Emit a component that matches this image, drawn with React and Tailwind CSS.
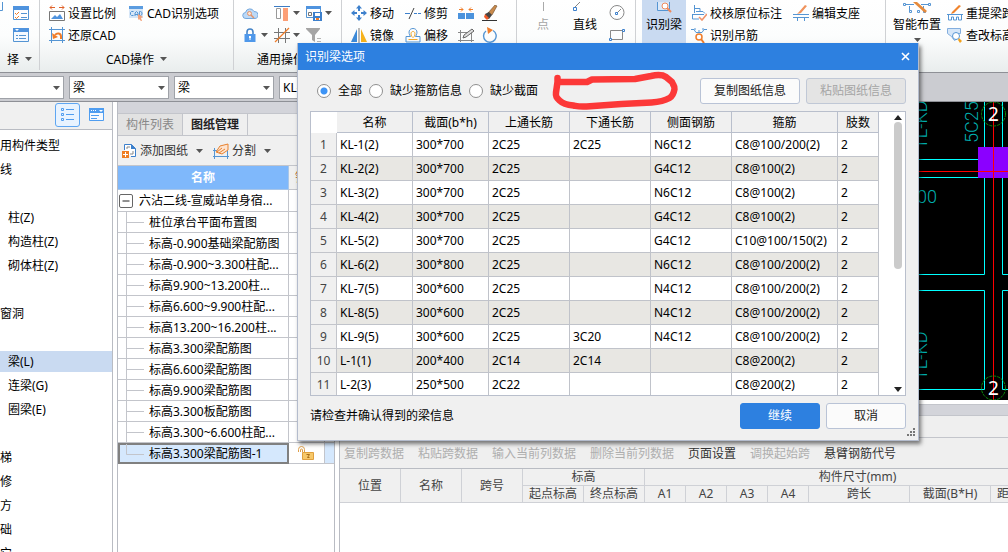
import React from "react";

const B = "#5595d3";
const O = "#f07d2a";

function Caret({ className = "" }) {
  return (
    <svg width="7" height="4" viewBox="0 0 7 4" className={"shrink-0 " + className} aria-hidden="true">
      <path d="M0 0h7L3.5 4z" fill="#555" />
    </svg>
  );
}

function Svg({ children, w = 16, h = 16 }) {
  return (
    <svg width={w} height={h} viewBox={`0 0 ${w} ${h}`} fill="none" className="shrink-0" aria-hidden="true">
      {children}
    </svg>
  );
}

const icons = {
  check: (
    <Svg>
      <path d="M.5 1.5h15v13H.5z" fill="#fff" stroke={B} />
      <path d="M0 1h16v4H0z" fill="#4f93de" />
      <path d="M2 8l1.500 1.500L6 7M2 12l1.500 1.500L6 11" stroke={O} />
      <path d="M8 8.500h6M8 12.500h6" stroke={B} />
    </Svg>
  ),
  props: (
    <Svg>
      <path d="M.5 1.500h15v13H.5z" fill="#f4f9ff" stroke={B} />
      <path d="M0 1h16v4H0z" fill="#4f93de" />
      <path d="M2 2h4L4 4z" fill="#fff" />
      <path d="M3 8.500h2M3 11.500h2M6 8.500h7M6 11.500h7" stroke={B} />
    </Svg>
  ),
  scale: (
    <Svg>
      <path d="M1 2.500h5M10 2.500h5M3 .5l-2 2 2 2M13 .5l2 2-2 2" stroke="#e0622a" />
      <path d="M.5 6.500h15v9H.5z" fill="#fff" stroke="#777" />
      <path d="M2 14l4-4 2 2 3-3 3 5z" fill="#4f93de" />
    </Svg>
  ),
  restore: (
    <Svg>
      <path d="M2.500 0v16M13.500 0v16M0 2.500h16M0 13.500h16" stroke={B} />
      <path d="M12 12V9.500C12 6 8 5.500 6 8" stroke={O} strokeWidth="2" />
      <path d="M3 6l1 6 5-2z" fill={O} />
    </Svg>
  ),
  cad: (
    <Svg w={15}>
      <path d="M0 1h14v12H0z" fill="#d6e6f7" />
      <path d="M0 1h14v3H0z" fill="#5b9ce0" />
      <path d="M4.500 6.500h-2L1.500 7.500v2l1 1h2M6 11V8l1.500-1.500L9 8v3M6 9.500h3M10.500 6.500v4h1l1.500-1v-2l-1.500-1z" stroke={B} />
      <path d="M9 9l5 3-2 1 1 3h-1l-2-2-1 1z" fill="#f3a27b" />
    </Svg>
  ),
  cloud: (
    <Svg>
      <path d="M4 13.500a3 3 0 01-.5-6A4.500 4.500 0 0112 6.500a3.500 3.500 0 011 7z" fill="#bcd9f7" stroke="#76a9de" />
      <circle cx="7.500" cy="8.500" r="2" fill="#fbe3d3" stroke="#e0936b" />
      <path d="M9 10l3 3" stroke="#e0936b" strokeWidth="1.500" />
    </Svg>
  ),
  lock: (
    <Svg>
      <path d="M5 7V5a3 3 0 016 0v2" stroke="#4584c8" strokeWidth="1.600" />
      <path d="M2.500 7h11v8h-11z" fill="#4f98ea" />
      <path d="M7.500 9h1v4h-1zM7 9h2v2H7z" fill="#fff" />
    </Svg>
  ),
  align: (
    <Svg>
      <path d="M0 1.500h16" stroke="#3c7cc4" />
      <path d="M2.500 3.500h4v10h-4z" stroke="#999" fill="#fff" />
      <path d="M9 3h5v13H9z" fill="#fc9f77" />
    </Svg>
  ),
  grid: (
    <Svg>
      <path d="M4.500 1v15M11.500 1v15M0 5.500h16M0 11.500h16" stroke="#777" />
      <path d="M1 15L15 1" stroke={O} strokeWidth="1.200" />
    </Svg>
  ),
  save: (
    <Svg>
      <path d="M.5 1.500h14v11H.5z" fill="#fff" stroke={B} />
      <path d="M0 1h15v3H0z" fill="#4f93de" />
      <path d="M2.500 7.500h3v3h-3z" stroke="#777" />
      <path d="M7 7h9v9H7z" fill="#3d80cc" />
      <path d="M9 8h5v3H9zM9 13h5v2H9z" fill="#fff" />
      <path d="M10 13h3v2h-3z" fill={O} />
    </Svg>
  ),
  filter: (
    <Svg>
      <path d="M0 1h14v1L9 8v7l-3-2V8L0 2z" fill="#a5a5a5" />
      <path d="M11 11.500h4M11 14.500h4" stroke="#b5b5b5" />
    </Svg>
  ),
  move: (
    <Svg>
      <path d="M8 0l3 3.500H9V6H7V3.500H5zM8 16l3-3.500H9V10H7v2.500H5zM0 8l3.500-3v2H6v2H3.500v2zM16 8l-3.500-3v2H10v2h2.500v2z" fill="#3d80cc" />
    </Svg>
  ),
  mirror: (
    <Svg>
      <path d="M6 2v13H0z" fill="#3d8ad8" />
      <path d="M10 2v13h6z" fill="#f6b21b" />
      <path d="M8 1v15" stroke="#777" />
    </Svg>
  ),
  trim: (
    <Svg>
      <path d="M0 8.500h5" stroke="#3d80cc" />
      <path d="M9 8.500h7" stroke="#3d80cc" strokeDasharray="3 1" />
      <path d="M4 14l5-11" stroke="#444" />
    </Svg>
  ),
  offset: (
    <Svg>
      <path d="M1 15v-5.500h4.500C2.500 5 4.500 1.500 8 1.500S13.500 5 10.500 9.500H15V15z" stroke={B} />
      <path d="M3.500 12.500h9M7.500 10.500C5 7 6 4.500 8 4.500S11 7 8.500 10.500" stroke="#f0a92c" />
    </Svg>
  ),
  merge: (
    <Svg>
      <path d="M0 8h7v6H0zM8 8h8v6H8z" fill="#4b93dd" />
      <path d="M1 4.500h4M11 4.500h4M3 2.500l2 2-2 2M13 2.500l-2 2 2 2" stroke={O} />
    </Svg>
  ),
  eraser: (
    <Svg>
      <path d="M6 8l7-8 2 1-5 9z" fill="#c98a4b" stroke="#6b4a2a" strokeWidth=".6" />
      <path d="M3 9l4-2 3 3-3 4-4-1z" fill="#444" />
      <path d="M3 9l4 4-2 2-3-3z" fill="#ef5a28" />
      <path d="M0 15.500h15" stroke="#333" />
    </Svg>
  ),
  sketch: (
    <Svg>
      <path d="M2.500 3v12M13.500 5v10M0 5.500h9M0 13.500h16" stroke="#888" />
      <path d="M5 11l1-3 8-6 2 2-8 6z" fill="#ddd" stroke="#666" />
    </Svg>
  ),
  rotate: (
    <Svg>
      <path d="M11 3.500A6.300 6.300 0 114 4" stroke={B} strokeWidth="1.400" />
      <path d="M5 0l6 3-5 4z" fill={O} />
    </Svg>
  ),
  circle: (
    <Svg>
      <circle cx="8" cy="7.500" r="7" stroke="#888" />
      <path d="M8 8l4-4" stroke="#888" />
      <path d="M6.500 7.500h2v2h-2z" fill="#fff" stroke="#3d80cc" />
    </Svg>
  ),
  rect: (
    <Svg>
      <path d="M1.500 3.500h12v9h-12z" stroke="#888" />
      <path d="M13.500 2.500h2v2h-2zM.5 11.500h2v2h-2z" fill="#fff" stroke="#3d80cc" />
    </Svg>
  ),
  verify: (
    <Svg>
      <path d="M3.500 0v8M3 3.500h6v3M5 6.500h7l2 2M1 9.500h12M1.500 9v5H8" stroke={B} />
      <path d="M8 12l3 3 5-6" stroke="#f0936b" strokeWidth="1.600" />
    </Svg>
  ),
  support: (
    <Svg>
      <path d="M0 9.500h16M0 12.500h16M4.500 13v3M11.500 13v3" stroke={B} />
      <path d="M5 8l7-8 2 1-6 7-4 1z" fill="#f0935c" />
    </Svg>
  ),
  hanging: (
    <Svg>
      <path d="M0 2.500h3l2 3h6l2-3h3M4 1v2M8 3v3M12 1v2" stroke={B} />
      <circle cx="8" cy="10" r="3" fill="#fff" stroke={O} strokeWidth="1.500" />
      <path d="M10 12l3 4" stroke={O} strokeWidth="2" />
    </Svg>
  ),
  respan: (
    <Svg>
      <path d="M0 9.500h16M1.500 10v5h3v-3h2v3h3v-3h2v3h3v-5" stroke={B} />
      <path d="M5 7l7-7 2 1-7 7-3 1z" fill="#f0832c" />
    </Svg>
  ),
  level: (
    <Svg>
      <path d="M.5 1.500h13v5h-3v5l-3 2-3-4-4-3z" fill="#d5e6f8" stroke="#83aede" />
      <circle cx="9" cy="9" r="3.500" fill="#fff" stroke={B} />
      <path d="M12 11l3 3-2 2-2-3z" fill="#f3a11b" />
    </Svg>
  ),
};

function Tool({ icon, label, caret, className = "" }) {
  return (
    <button type="button" aria-label={label || icon} className={"flex h-[22px] items-center gap-[3px] whitespace-nowrap " + className}>
      {icons[icon]}
      {label && <span>{label}</span>}
      {caret && <Caret />}
    </button>
  );
}

function Group({ label, className = "", children }) {
  return (
    <section className={"flex h-[70px] shrink-0 flex-col border-r border-[#cfd1d4] " + className}>
      <div className="flex h-[46px] shrink-0 items-start pt-[2px]">{children}</div>
      {label && (
        <button type="button" className="flex h-[26px] shrink-0 items-center justify-center gap-[6px] whitespace-nowrap">
          {label}
          <Caret />
        </button>
      )}
    </section>
  );
}

function Ribbon() {
  return (
    <header className="flex h-[73px] shrink-0 overflow-hidden border-b border-[#8e9096] bg-linear-to-b from-white via-[#fcfdfd] to-[#e9eded]">
      <Group label="择" className="w-10">
        <div className="flex w-full justify-between pr-[10px]">
          <Svg w={3} h={12}>
            <path d="M0 8.500h2.500V0" stroke={B} />
          </Svg>
          <div className="flex flex-col">
            <Tool icon="check" />
            <Tool icon="props" />
          </div>
        </div>
      </Group>
      <Group label="CAD操作" className="w-[194px]">
        <div className="grid grid-cols-[80px_auto] pl-[9px]">
          <Tool icon="scale" label="设置比例" />
          <Tool icon="cad" label="CAD识别选项" />
          <Tool icon="restore" label="还原CAD" />
        </div>
      </Group>
      <Group label="通用操作" className="w-[108px]">
        <div className="grid grid-cols-[32px_32px_auto] pl-[8px]">
          <Tool icon="cloud" />
          <Tool icon="align" caret />
          <Tool icon="save" caret />
          <Tool icon="lock" caret />
          <Tool icon="grid" caret />
          <Tool icon="filter" />
        </div>
      </Group>
      <Group className="w-[175px]">
        <div className="grid grid-cols-[54px_53px_24px_auto] pl-[9px]">
          <Tool icon="move" label="移动" />
          <Tool icon="trim" label="修剪" />
          <Tool icon="merge" />
          <Tool icon="eraser" />
          <Tool icon="mirror" label="镜像" />
          <Tool icon="offset" label="偏移" />
          <Tool icon="sketch" />
          <Tool icon="rotate" />
        </div>
      </Group>
      <Group className="w-[119px]">
        <div className="flex pl-5">
          <button type="button" className="flex w-3 flex-col items-center text-[#a5a5a5]">
            <Svg w={12} h={14}>
              <path d="M6.500 0v9" stroke="#aaa" />
            </Svg>
            点
          </button>
          <button type="button" className="ml-[24px] flex w-6 flex-col items-center">
            <Svg w={24} h={14}>
              <path d="M2 5l7-7" stroke="#888" />
              <path d="M.5 5.500h3v3h-3z" fill="#fff" stroke="#3d80cc" />
            </Svg>
            直线
          </button>
          <div className="ml-[12px] flex flex-col">
            <Tool icon="circle" />
            <Tool icon="rect" />
          </div>
        </div>
      </Group>
      <Group className="w-[250px]">
        <div className="-mt-[2px] flex pl-[6px]">
          <button type="button" className="flex h-[46px] w-11 flex-col items-center bg-[#c9daf1] pt-[2px]">
            <Svg w={16} h={14}>
              <path d="M1.500 0v8.500h12V0" stroke={B} fill="#dbe8f8" />
              <circle cx="9" cy="4" r="3" fill="#fff" stroke="#f08a5c" />
              <path d="M11 6l4 4" stroke="#f08a5c" strokeWidth="2" />
            </Svg>
            识别梁
          </button>
          <div className="ml-[5px] grid grid-cols-[102px_auto] content-start pt-[2px]">
            <Tool icon="verify" label="校核原位标注" />
            <Tool icon="support" label="编辑支座" />
            <Tool icon="hanging" label="识别吊筋" />
          </div>
        </div>
      </Group>
      <section className="flex shrink-0 pt-[2px] pl-[7px]">
        <button type="button" className="flex w-12 flex-col items-center whitespace-nowrap">
          <Svg w={32} h={14}>
            <path d="M5 2.500h8M20 2.500h7M8.500 4v5M22.500 4v5" stroke={B} />
            <path d="M2.500 1.500h2v2h-2zM27.500 1.500h2v2h-2zM8.500 8.500h2v2h-2zM16.500 8.500h2v2h-2zM22.500 8.500h2v2h-2z" fill="#fff" stroke={B} />
            <path d="M12 0l12 11 2-2-10-9z" fill="#e58a3c" />
          </Svg>
          智能布置
          <Caret className="mt-[5px]" />
        </button>
        <div className="ml-[6px] flex flex-col">
          <Tool icon="respan" label="重提梁跨" />
          <Tool icon="level" label="查改标高" />
        </div>
      </section>
    </header>
  );
}

function Combo({ value, label, className }) {
  return (
    <div className={"relative h-[23px] shrink-0 border border-[#9fa2a8] bg-white " + className}>
      <select aria-label={label} defaultValue={value} className="h-full w-full appearance-none bg-transparent pl-[3px] outline-none">
        <option>{value}</option>
      </select>
      <Caret className="pointer-events-none absolute top-[9px] right-[3px]" />
    </div>
  );
}

const nav = [
  ["用构件类型", 0], ["线", 0], null,
  ["柱(Z)", 1], ["构造柱(Z)", 1], ["砌体柱(Z)", 1], null,
  ["窗洞", 0], null,
  ["梁(L)", 1], ["连梁(G)", 1], ["圈梁(E)", 1], null,
  ["梯", 0], ["修", 0], ["方", 0], ["础", 0], ["它", 0],
];

function Sidebar() {
  return (
    <aside className="flex w-[113px] shrink-0 flex-col overflow-hidden border-r border-[#b9bcc3] bg-white">
      <div className="flex h-7 shrink-0 items-start justify-end gap-[9px] border-b border-[#b9bcc3] bg-[#f0f0f0] pt-px pr-[8px]">
        <button type="button" aria-label="列表" className="flex h-6 w-[25px] items-center justify-center rounded-[3px] border border-[#5ea6f2] bg-[#e8f3ff]">
          <Svg w={14} h={14}>
            <path d="M.5.500h2v2h-2zM.5 5.500h2v2h-2zM.5 10.500h2v2h-2z" stroke="#4f9df0" />
            <path d="M5 1.500h8M5 6.500h8M5 11.500h8" stroke="#4f9df0" />
          </Svg>
        </button>
        <button type="button" aria-label="窗口" className="flex h-6 items-center">
          <Svg w={15} h={14}>
            <path d="M.5.500h14v12H.5z" fill="#f6faff" stroke="#4f9df0" />
            <path d="M0 0h15v5H0z" fill="#4f9df0" />
            <path d="M2 2.500h5" stroke="#fff" strokeDasharray="1 1" />
            <path d="M10 2h4l-2 2z" fill="#fff" />
            <path d="M2 7.500h8M2 10.500h6" stroke="#4f9df0" />
          </Svg>
        </button>
      </div>
      <ul className="pt-[3px]">
        {nav.map((n, i) => (
          <li key={i} className="flex h-6 shrink-0 items-center whitespace-nowrap">
            {n && (
              <a
                href="#"
                className={
                  "flex h-[21px] w-full items-center " +
                  (n[0] === "梁(L)" ? "bg-[#c9daf1] pl-2" : n[1] ? "pl-2" : "")
                }
              >
                {n[0]}
              </a>
            )}
          </li>
        ))}
      </ul>
    </aside>
  );
}

const drawings = [
  "桩位承台平面布置图",
  "标高-0.900基础梁配筋图",
  "标高-0.900~3.300柱配...",
  "标高9.900~13.200柱...",
  "标高6.600~9.900柱配...",
  "标高13.200~16.200柱...",
  "标高3.300梁配筋图",
  "标高6.600梁配筋图",
  "标高9.900梁配筋图",
  "标高3.300板配筋图",
  "标高3.300~6.600柱配...",
  "标高3.300梁配筋图-1",
];

function Drawings() {
  const last = drawings.length - 1;
  return (
    <section className="flex w-[218px] shrink-0 flex-col overflow-hidden border-x border-[#b9bcc3] bg-white">
      <div className="h-3 shrink-0 border-b border-[#c3c5cb] bg-[#d3d4da]" />
      <div role="tablist" className="flex h-[22px] shrink-0 border-b border-[#c3c5cb] bg-[#efefef]">
        <button type="button" role="tab" aria-selected="false" className="w-[65px] border-r border-[#c3c5cb] bg-[#e2e2e2] text-[#888]">
          构件列表
        </button>
        <button type="button" role="tab" aria-selected="true" className="w-[65px] border-r border-[#c3c5cb] font-bold text-[#222]">
          图纸管理
        </button>
      </div>
      <div className="flex h-[30px] shrink-0 items-center border-b border-[#c3c5cb] bg-[#f0f0f0] pl-[4px] text-[#333]">
        <button type="button" className="flex items-center gap-[3px]">
          <Svg w={15} h={16}>
            <path d="M2.500 7V1.500h7l4 4v8H9" fill="#fff" stroke="#3d80cc" />
            <path d="M9 1v5h5z" fill="#3d80cc" />
            <path d="M0 8h7v7H0z" fill="#ef7d22" />
            <path d="M3.500 9v5M1 11.500h5" stroke="#fff" />
            <path d="M5 6V4h3M8 11h3V8" stroke="#888" />
          </Svg>
          <span>添加图纸</span>
          <Caret className="ml-[5px]" />
        </button>
        <button type="button" className="ml-[10px] flex items-center gap-[3px]">
          <Svg w={16} h={16}>
            <path d="M1.500 5v11M14.500 5v11M0 7.500h9M0 13.500h16" stroke={B} />
            <path d="M3 9l4-6 8-2v6l-6 4z" fill="#fde3cf" stroke="#e8822f" />
            <path d="M4 9l5-4M6 10l6-4" stroke="#e8822f" />
          </Svg>
          <span>分割</span>
          <Caret className="ml-[5px]" />
        </button>
      </div>
      <table className="w-[216px] table-fixed border-separate border-spacing-0">
        <colgroup>
          <col className="w-[171px]" />
          <col className="w-9" />
          <col />
        </colgroup>
        <thead>
          <tr className="h-6">
            <th className="border-r border-b border-[#a9c6e8] bg-[#7fb8fb] p-0 font-bold text-white">名称</th>
            <th className="border-b border-[#c3c5cb] bg-[#f0f0f0] p-0 pl-[6px] text-left font-normal text-[#b5651d]">锁定</th>
            <th className="border-b border-[#c3c5cb] bg-[#f0f0f0] p-0" />
          </tr>
        </thead>
        <tbody>
          <tr className="h-[22px]">
            <td className="border-r border-b border-[#c3c5cb] p-0">
              <div className="flex items-center gap-[6px] pl-px whitespace-nowrap">
                <button type="button" aria-label="折叠" className="shrink-0">
                  <Svg w={14} h={14}>
                    <rect x=".5" y=".5" width="13" height="13" rx="1.500" fill="#fff" stroke="#666" />
                    <path d="M3.500 7h7" stroke="#222" />
                  </Svg>
                </button>
                六沾二线-宣威站单身宿...
              </div>
            </td>
            <td className="border-r border-b border-[#c3c5cb] p-0" />
            <td className="border-b border-[#c3c5cb] p-0" />
          </tr>
          {drawings.map((d, i) => (
            <tr key={d} className="h-[21px]">
              <td className={i === last ? "border-2 border-[#808080] bg-[#d5e8fd] p-0" : "border-r border-b border-[#c3c5cb] p-0"}>
                <div className={"flex items-center whitespace-nowrap " + (i === last ? "h-[17px] gap-[5px] pl-[6px]" : "h-5 gap-[5px] pl-2")}>
                  <Svg w={18} h={20}>
                    <path d={i === last ? "M.5 0v10.500H18" : "M.5 0v20M0 10.500h18"} stroke="#c3c5cb" />
                  </Svg>
                  {d}
                </div>
              </td>
              <td className="border-r border-b border-[#c3c5cb] p-0">
                {i === last && (
                  <div className="flex pl-[9px]">
                    <Svg w={16} h={15}>
                      <path d="M.5 6V3.500a3 3 0 016 0V6M2.500 6V4a1 1 0 012 0v2" stroke="#dfa04a" />
                      <path d="M4.500 6.500h11v7h-11z" fill="#f7c869" stroke="#e0a03e" />
                      <path d="M8.500 8.500h3l-2 3h2" stroke="#a86d18" />
                    </Svg>
                  </div>
                )}
              </td>
              <td className={"border-b border-[#c3c5cb] p-0 " + (i === last ? "bg-[#d5e8fd]" : "")} />
            </tr>
          ))}
        </tbody>
      </table>
    </section>
  );
}

function Canvas() {
  return (
    <svg className="h-[298px] w-full shrink-0 bg-black" role="img" aria-label="CAD">
      <path
        d="M500 57.500h149M500 75.500h149M500 172.500h145.500V0M500 188.500h145.500V287.500H500M663.500 0v172.500H900M900 188.500H663.500v99H900"
        fill="none"
        stroke="#00ffff"
      />
      <rect x="639" y="45" width="200" height="31" fill="#8b00ff" />
      <path d="M500 69.500h400M654.500 0v298" stroke="#f00" />
      <g fill="none" stroke="#0a8a0a" strokeDasharray="3 1">
        <circle cx="654.500" cy="12" r="12" />
        <circle cx="654.500" cy="286" r="12" />
      </g>
      <g fill="#fff" fontSize="19" textAnchor="middle" fontFamily='"Noto Sans", sans-serif'>
        <text x="654.500" y="19">2</text>
        <text x="654.500" y="293">2</text>
      </g>
      <g fontSize="18" fill="#00b0b0" fontFamily="Roboto, sans-serif" fontWeight="300">
        <text transform="translate(588 47) rotate(-90)">TL-KD</text>
        <text transform="translate(639 41) rotate(-90)">5C25</text>
        <text x="598" y="101" textAnchor="end">600</text>
        <text transform="translate(588 278) rotate(-90)">TL-KD</text>
      </g>
    </svg>
  );
}

const actions = [
  ["复制跨数据", 0], ["粘贴跨数据", 0], ["输入当前列数据", 0], ["删除当前列数据", 0],
  ["页面设置", 1], ["调换起始跨", 0], ["悬臂钢筋代号", 1],
];

function SpanTable() {
  const th = "border-r border-b border-[#cfd1d6] p-0 font-normal ";
  return (
    <div className="flex min-h-0 flex-1 flex-col overflow-hidden border-l border-[#b9bcc3] pt-[4px]">
      <div className="h-3 shrink-0 border-y border-[#c3c5cb] bg-[#d3d4da]" />
      <div className="h-[22px] shrink-0 border-b border-[#c3c5cb] bg-[#efefef]" />
      <div className="flex h-[31px] shrink-0 items-center gap-[14px] border-b border-[#b9bcc3] bg-[#efefef] pl-[4px] whitespace-nowrap">
        {actions.map(([t, on]) => (
          <button key={t} type="button" disabled={!on} className="text-[#333] disabled:text-[#aeaeae]">
            {t}
          </button>
        ))}
      </div>
      <table className="w-[731px] table-fixed border-separate border-spacing-0 bg-[#f0f0f0] leading-4 text-[#444]">
        <colgroup>
          <col className="w-[61px]" /><col className="w-[61px]" /><col className="w-[61px]" />
          <col className="w-[61px]" /><col className="w-[61px]" />
          <col className="w-[41px]" /><col className="w-[41px]" /><col className="w-[41px]" /><col className="w-[41px]" />
          <col className="w-[101px]" /><col className="w-[81px]" /><col />
        </colgroup>
        <thead>
          <tr>
            <th rowSpan={2} className={th}>位置</th>
            <th rowSpan={2} className={th}>名称</th>
            <th rowSpan={2} className={th}>跨号</th>
            <th colSpan={2} className={th}>标高</th>
            <th colSpan={7} className={th}>构件尺寸(mm)</th>
          </tr>
          <tr>
            {["起点标高", "终点标高", "A1", "A2", "A3", "A4", "跨长", "截面(B*H)"].map((t) => (
              <th key={t} className={th + "whitespace-nowrap"}>{t}</th>
            ))}
            <th className={th + "pl-[6px] text-left"}>距左边线</th>
          </tr>
        </thead>
      </table>
    </div>
  );
}

const beams = [
  ["KL-1(2)", "300*700", "2C25", "2C25", "N6C12", "C8@100/200(2)", "2"],
  ["KL-2(2)", "300*700", "2C25", "", "G4C12", "C8@100(2)", "2"],
  ["KL-3(2)", "300*700", "2C25", "", "N6C12", "C8@100(2)", "2"],
  ["KL-4(2)", "300*700", "2C25", "", "G4C12", "C8@100(2)", "2"],
  ["KL-5(2)", "300*700", "2C25", "", "G4C12", "C10@100/150(2)", "2"],
  ["KL-6(2)", "300*800", "2C25", "", "N6C12", "C8@100/200(2)", "2"],
  ["KL-7(5)", "300*600", "2C25", "", "N4C12", "C8@100/200(2)", "2"],
  ["KL-8(5)", "300*600", "2C25", "", "N4C12", "C8@100/200(2)", "2"],
  ["KL-9(5)", "300*600", "2C25", "3C20", "N4C12", "C8@100/200(2)", "2"],
  ["L-1(1)", "200*400", "2C14", "2C14", "", "C8@200(2)", "2"],
  ["L-2(3)", "250*500", "2C22", "", "", "C8@200(2)", "2"],
];

function Radio({ label, checked }) {
  return (
    <label className="flex items-center gap-[7px]">
      <input
        type="radio"
        name="scope"
        defaultChecked={checked}
        className="h-[14px] w-[14px] appearance-none rounded-full border border-[#8f8f8f] bg-white checked:bg-[radial-gradient(circle,#3d94f6_0_3px,#fff_4px)]"
      />
      {label}
    </label>
  );
}

function Dialog() {
  const btn = "h-[26px] rounded-[3px] border ";
  return (
    <div role="dialog" aria-label="识别梁选项" className="absolute top-[43px] left-[297px] flex w-[622px] flex-col border border-t-0 border-[#b4bccd] bg-[#f0f0f0] shadow-[2px_3px_4px_rgba(0,0,0,0.5)]">
      <div className="flex h-[27px] items-center justify-between bg-[#2d80e0] pr-[8px] pl-[7px] text-white">
        <h1>识别梁选项</h1>
        <button type="button" aria-label="关闭" className="flex">
          <Svg w={9} h={9}>
            <path d="M1 1l7 7M8 1L1 8" stroke="#fff" strokeWidth="1.600" />
          </Svg>
        </button>
      </div>
      <div className="flex h-[41px] items-center pr-[12px] pl-[19px]">
        <div className="flex gap-[7px]">
          <Radio label="全部" checked />
          <Radio label="缺少箍筋信息" />
          <Radio label="缺少截面" />
        </div>
        <svg width="130" height="41" viewBox="0 0 130 41" fill="none" className="ml-[12px] shrink-0" aria-hidden="true">
          <path
            d="M7.500 8v4H37l5-2.500 43-.5 16-3c7-1.500 12-1 15 1l6 5c1 3 3 4 2.500 7s-1.500 7-5 9-11 4-18 4.500l-30 1.500-35 2.500c-8 .5-10-.5-13-1-6-.5-11-2-14-5s-4-4-3.500-8L7.500 12"
            stroke="#fc3838"
            strokeWidth="6.500"
            strokeLinecap="round"
            strokeLinejoin="round"
          />
        </svg>
        <div className="ml-auto flex gap-[6px]">
          <button type="button" className={btn + "w-[100px] border-[#b9c3d6] bg-[#fbfbfb] text-[#222]"}>复制图纸信息</button>
          <button type="button" disabled className={btn + "w-[100px] border-[#c0c8d6] bg-[#e4e4e4] text-[#a5a5a5]"}>粘贴图纸信息</button>
        </div>
      </div>
      <div className="mx-[12px] flex border border-[#b9bfcc] bg-white">
        <table className="w-[568px] table-fixed border-separate border-spacing-0">
          <colgroup>
            <col className="w-[26px]" /><col className="w-[76px]" /><col className="w-[76px]" /><col className="w-[81px]" />
            <col className="w-[81px]" /><col className="w-[81px]" /><col className="w-[106px]" /><col />
          </colgroup>
          <thead>
            <tr className="h-[21px]">
              <td className="p-0" />
              {["名称", "截面(b*h)", "上通长筋", "下通长筋", "侧面钢筋", "箍筋", "肢数"].map((t) => (
                <th key={t} className="border-r border-b border-[#b9bfcc] bg-[#f0f0f0] p-0 font-normal">{t}</th>
              ))}
            </tr>
          </thead>
          <tbody>
            {beams.map((r, i) => (
              <tr key={r[0]} className="h-6 last:h-[22px] even:bg-[#e8e7e3]">
                <th className={"border-r border-[#c3c5cb] bg-[#f0f0f0] p-0 font-normal text-[#444] " + (i < 10 ? "border-b" : "")}>{i + 1}</th>
                {r.map((c, j) => (
                  <td key={j} className={"border-r border-[#c0c3ca] p-0 pl-[3px] whitespace-nowrap " + (i < 10 ? "border-b" : "")}>{c}</td>
                ))}
              </tr>
            ))}
          </tbody>
        </table>
        <div className="ml-auto flex w-[14px] flex-col items-center justify-between py-[3px]">
          <svg width="8" height="5" viewBox="0 0 8 5" aria-hidden="true"><path d="M0 5h8L4 0z" fill="#222" /></svg>
          <div className="mt-[2px] mb-auto h-[147px] w-[8px] rounded-full bg-[#cbcbcb]" />
          <svg width="8" height="5" viewBox="0 0 8 5" aria-hidden="true"><path d="M0 0h8L4 5z" fill="#222" /></svg>
        </div>
      </div>
      <div className="flex h-[39px] items-center justify-between px-[12px]">
        <p>请检查并确认得到的梁信息</p>
        <div className="flex gap-[6px]">
          <button type="button" className={btn + "w-20 border-[#2d80e0] bg-[#2d80e0] text-white"}>继续</button>
          <button type="button" className={btn + "w-20 border-[#b9c3d6] bg-[#fbfbfb] text-[#222]"}>取消</button>
        </div>
      </div>
      <div className="flex h-[5px] items-end justify-end pr-[2px] pb-[3px]">
        <Svg w={9} h={9}>
          <path d="M6 0h2v2H6zM3 3h2v2H3zM6 3h2v2H6zM0 6h2v2H0zM3 6h2v2H3zM6 6h2v2H6z" fill="#777" />
        </Svg>
      </div>
    </div>
  );
}

export default function App() {
  return (
    <div className="relative flex h-screen min-h-[552px] w-full flex-col overflow-hidden bg-white font-['Noto_Sans','Noto_Sans_CJK_SC',sans-serif] text-[12px] leading-[17px] text-black">
      <Ribbon />
      <div className="flex h-[29px] shrink-0 items-center gap-[5px] border-b border-[#8e9096] bg-[#cbccd1]">
        <Combo label="楼层" value="" className="w-16 border-l-0" />
        <Combo label="构件类别" value="梁" className="w-[100px]" />
        <Combo label="构件类型" value="梁" className="w-[100px]" />
        <Combo label="构件" value="KL-1" className="w-[100px]" />
      </div>
      <div className="flex min-h-0 flex-1 gap-[4px]">
        <Sidebar />
        <Drawings />
        <main className="flex min-w-0 flex-1 flex-col">
          <Canvas />
          <SpanTable />
        </main>
      </div>
      <Dialog />
    </div>
  );
}
